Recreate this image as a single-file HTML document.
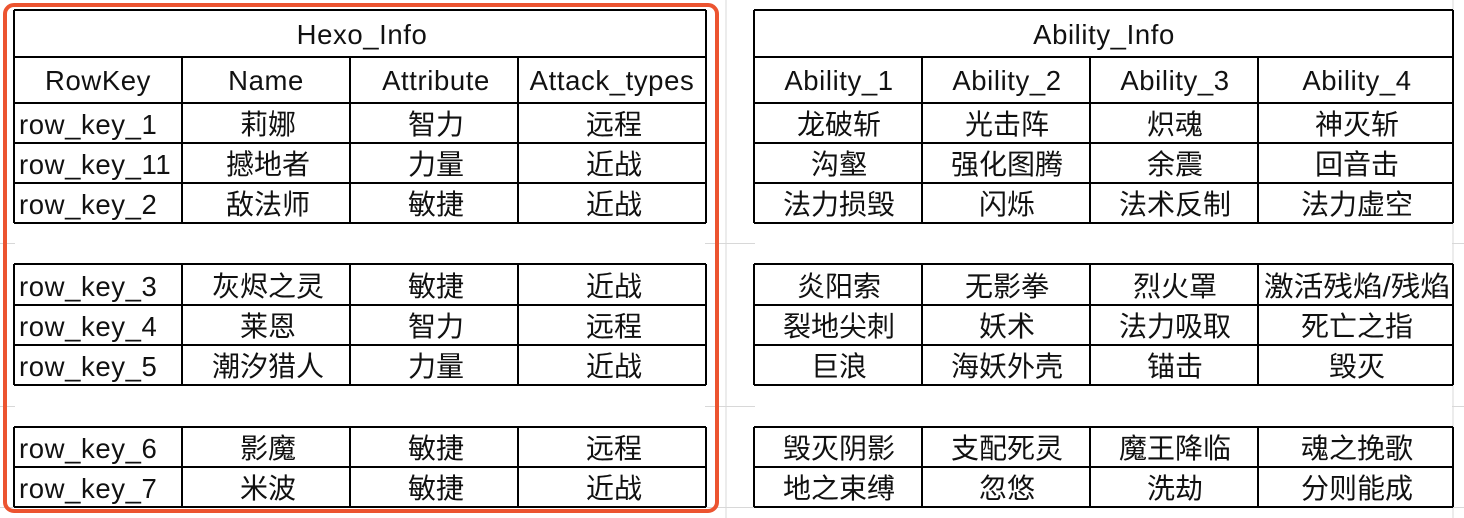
<!DOCTYPE html>
<html><head><meta charset="utf-8"><style>
html,body{margin:0;padding:0;background:#fff;width:1464px;height:518px;overflow:hidden}
svg text{font-family:"Liberation Sans","Noto Sans CJK SC",sans-serif;font-size:28px;fill:#111}
svg text.l{letter-spacing:0.6px;font-size:27.5px}
</style></head><body>
<svg width="1464" height="518" xmlns="http://www.w3.org/2000/svg">
<g stroke="#d8d8d8" stroke-width="1">
<line x1="726" y1="0" x2="726" y2="518"/>
<line x1="0" y1="243.5" x2="1464" y2="243.5"/>
<line x1="0" y1="406.5" x2="1464" y2="406.5"/>
<line x1="0" y1="507.5" x2="1464" y2="507.5"/>
<line x1="1453" y1="0" x2="1453" y2="518"/>
</g>
<g stroke="#000" stroke-width="2" fill="none">
<path d="M14 10H706M14 57H706M14 103H706M14 143H706M14 183H706M14 223H706M14 264H706M14 305H706M14 345H706M14 385H706M14 427H706M14 467H706M14 507H706"/>
<path d="M14 10V223M706 10V223M14 264V385M706 264V385M14 427V507M706 427V507"/>
<path d="M182 57V223M350 57V223M518 57V223M182 264V385M350 264V385M518 264V385M182 427V507M350 427V507M518 427V507"/>
<path d="M754 10H1453M754 57H1453M754 103H1453M754 143H1453M754 183H1453M754 223H1453M754 264H1453M754 305H1453M754 345H1453M754 385H1453M754 427H1453M754 467H1453M754 507H1453"/>
<path d="M754 10V223M1453 10V223M754 264V385M1453 264V385M754 427V507M1453 427V507"/>
<path d="M922 57V223M1090 57V223M1258 57V223M922 264V385M1090 264V385M1258 264V385M922 427V507M1090 427V507M1258 427V507"/>
</g>
<g fill="#fff"><rect x="15" y="224" width="690" height="39"/><rect x="15" y="386" width="690" height="40"/><rect x="755" y="224" width="697" height="39"/><rect x="755" y="386" width="697" height="40"/></g>
<rect x="5" y="5" width="712" height="506" rx="9" fill="none" stroke="#ec5430" stroke-width="4"/>
<g text-anchor="middle">
<text class="l" x="362" y="44">Hexo_Info</text>
<text class="l" x="98" y="90">RowKey</text><text class="l" x="266" y="90">Name</text><text class="l" x="436" y="90">Attribute</text><text class="l" x="612" y="90">Attack_types</text>
<text x="268" y="134">莉娜</text><text x="436" y="134">智力</text><text x="614" y="134">远程</text>
<text x="268" y="174">撼地者</text><text x="436" y="174">力量</text><text x="614" y="174">近战</text>
<text x="268" y="214">敌法师</text><text x="436" y="214">敏捷</text><text x="614" y="214">近战</text>
<text x="268" y="296">灰烬之灵</text><text x="436" y="296">敏捷</text><text x="614" y="296">近战</text>
<text x="268" y="336">莱恩</text><text x="436" y="336">智力</text><text x="614" y="336">远程</text>
<text x="268" y="376">潮汐猎人</text><text x="436" y="376">力量</text><text x="614" y="376">近战</text>
<text x="268" y="458">影魔</text><text x="436" y="458">敏捷</text><text x="614" y="458">远程</text>
<text x="268" y="498">米波</text><text x="436" y="498">敏捷</text><text x="614" y="498">近战</text>

<text class="l" x="1104" y="44">Ability_Info</text>
<text class="l" x="839" y="90">Ability_1</text><text class="l" x="1007" y="90">Ability_2</text><text class="l" x="1175" y="90">Ability_3</text><text class="l" x="1357" y="90">Ability_4</text>
<text x="839" y="134">龙破斩</text><text x="1007" y="134">光击阵</text><text x="1175" y="134">炽魂</text><text x="1357" y="134">神灭斩</text>
<text x="839" y="174">沟壑</text><text x="1007" y="174">强化图腾</text><text x="1175" y="174">余震</text><text x="1357" y="174">回音击</text>
<text x="839" y="214">法力损毁</text><text x="1007" y="214">闪烁</text><text x="1175" y="214">法术反制</text><text x="1357" y="214">法力虚空</text>
<text x="839" y="296">炎阳索</text><text x="1007" y="296">无影拳</text><text x="1175" y="296">烈火罩</text><text x="1357" y="296" textLength="186" lengthAdjust="spacingAndGlyphs">激活残焰/残焰</text>
<text x="839" y="336">裂地尖刺</text><text x="1007" y="336">妖术</text><text x="1175" y="336">法力吸取</text><text x="1357" y="336">死亡之指</text>
<text x="839" y="376">巨浪</text><text x="1007" y="376">海妖外壳</text><text x="1175" y="376">锚击</text><text x="1357" y="376">毁灭</text>
<text x="839" y="458">毁灭阴影</text><text x="1007" y="458">支配死灵</text><text x="1175" y="458">魔王降临</text><text x="1357" y="458">魂之挽歌</text>
<text x="839" y="498">地之束缚</text><text x="1007" y="498">忽悠</text><text x="1175" y="498">洗劫</text><text x="1357" y="498">分则能成</text>
</g>
<g class="lk">
<text class="l" x="19" y="134">row_key_1</text>
<text class="l" x="19" y="174">row_key_11</text>
<text class="l" x="19" y="214">row_key_2</text>
<text class="l" x="19" y="296">row_key_3</text>
<text class="l" x="19" y="336">row_key_4</text>
<text class="l" x="19" y="376">row_key_5</text>
<text class="l" x="19" y="458">row_key_6</text>
<text class="l" x="19" y="498">row_key_7</text>
</g>
</svg>
</body></html>
